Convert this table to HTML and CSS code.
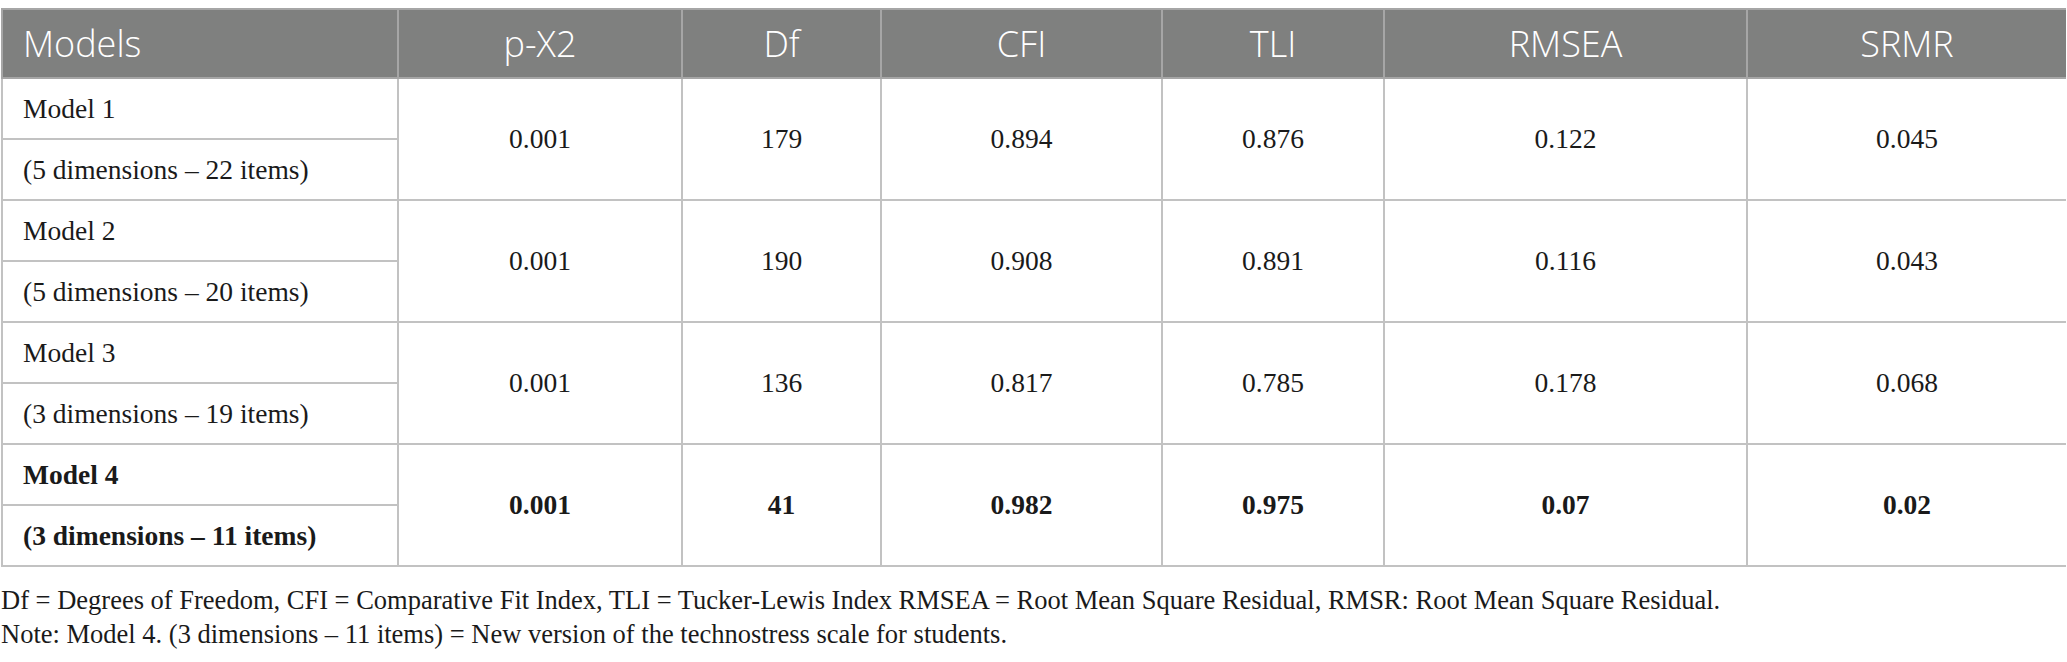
FILE: index.html
```html
<!DOCTYPE html>
<html lang="en">

<head>
    <meta charset="UTF-8">
    <meta name="viewport" content="width=device-width, initial-scale=1.0">
    <title>Model fit indices</title>
    <link rel="stylesheet" href="styles.css">
</head>

<body>
    <table class="fit-table">
        <colgroup>
            <col class="col-model">
            <col class="col-px2">
            <col class="col-df">
            <col class="col-cfi">
            <col class="col-tli">
            <col class="col-rmsea">
            <col class="col-srmr">
        </colgroup>
        <thead>
            <tr>
                <th class="label">Models</th>
                <th>p-X2</th>
                <th>Df</th>
                <th>CFI</th>
                <th>TLI</th>
                <th>RMSEA</th>
                <th>SRMR</th>
            </tr>
        </thead>
        <tbody>
            <tr>
                <td class="label">Model 1</td>
                <td rowspan="2">0.001</td>
                <td rowspan="2">179</td>
                <td rowspan="2">0.894</td>
                <td rowspan="2">0.876</td>
                <td rowspan="2">0.122</td>
                <td rowspan="2">0.045</td>
            </tr>
            <tr>
                <td class="label">(5 dimensions – 22 items)</td>
            </tr>
            <tr>
                <td class="label">Model 2</td>
                <td rowspan="2">0.001</td>
                <td rowspan="2">190</td>
                <td rowspan="2">0.908</td>
                <td rowspan="2">0.891</td>
                <td rowspan="2">0.116</td>
                <td rowspan="2">0.043</td>
            </tr>
            <tr>
                <td class="label">(5 dimensions – 20 items)</td>
            </tr>
            <tr>
                <td class="label">Model 3</td>
                <td rowspan="2">0.001</td>
                <td rowspan="2">136</td>
                <td rowspan="2">0.817</td>
                <td rowspan="2">0.785</td>
                <td rowspan="2">0.178</td>
                <td rowspan="2">0.068</td>
            </tr>
            <tr>
                <td class="label">(3 dimensions – 19 items)</td>
            </tr>
            <tr class="best">
                <td class="label">Model 4</td>
                <td rowspan="2">0.001</td>
                <td rowspan="2">41</td>
                <td rowspan="2">0.982</td>
                <td rowspan="2">0.975</td>
                <td rowspan="2">0.07</td>
                <td rowspan="2">0.02</td>
            </tr>
            <tr class="best">
                <td class="label">(3 dimensions – 11 items)</td>
            </tr>
        </tbody>
    </table>

    <div class="table-notes">
        <p>Df = Degrees of Freedom, CFI = Comparative Fit Index, TLI = Tucker-Lewis Index RMSEA = Root Mean Square Residual, RMSR: Root Mean Square Residual.</p>
        <p>Note: Model 4. (3 dimensions – 11 items) = New version of the technostress scale for students.</p>
    </div>
</body>

</html>
```

FILE: styles.css
```css
body {
    margin: 8px 1px 0;
    background: white;
    color: #1a1a1a;
    font-family: "Liberation Serif", "Times New Roman", serif;
}

.fit-table {
    width: 100%;
    border-collapse: collapse;
    table-layout: fixed;
}

.col-model { width: 396px; }
.col-px2 { width: 284px; }
.col-df { width: 199px; }
.col-cfi { width: 281px; }
.col-tli { width: 222px; }
.col-rmsea { width: 363px; }
.col-srmr { width: 320px; }

.fit-table th,
.fit-table td {
    border: 2px solid #c2c2c2;
    text-align: center;
    padding: 0 20px;
}

.fit-table th {
    height: 67px;
    background: #7f807f;
    color: white;
    font-family: "Open Sans", "Noto Sans", sans-serif;
    font-weight: 300;
    font-size: 36px;
    border-color: #a6a6a6;
}

.fit-table td {
    height: 59px;
    font-size: 27.5px;
}

.fit-table .label {
    text-align: left;
}

.best td {
    font-weight: bold;
}

.table-notes {
    margin-top: 16px;
    font-size: 26.5px;
    line-height: 34px;
}

.table-notes p {
    margin: 0;
}
```
